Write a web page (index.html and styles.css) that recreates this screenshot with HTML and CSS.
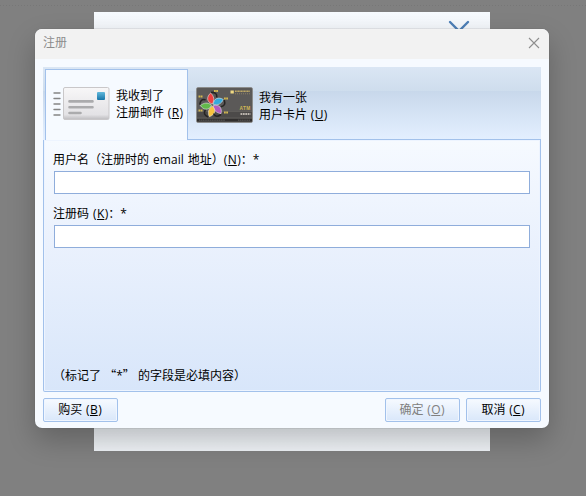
FILE: index.html
```
<!DOCTYPE html>
<html lang="zh-CN">
<head>
<meta charset="utf-8">
<title>注册</title>
<link rel="stylesheet" href="styles.css">
</head>
<body>
<div class="desktop">
  <div class="backdrop-window">
    <svg class="chevron" width="22" height="16" viewBox="0 0 22 16"><path d="M2 3 11 12 20 3" fill="none" stroke="#4d7fb7" stroke-width="2.4" stroke-linecap="round"/></svg>
  </div>
  <section class="dialog">
    <header class="titlebar">
      <span>注册</span>
      <svg width="12" height="12" viewBox="0 0 12 12"><path d="M1 1 11 11M11 1 1 11" stroke="#8e8e8e" stroke-width="1.1"/></svg>
    </header>
    <main class="content">
      <nav class="tabs">
        <div class="tab active">
          <svg class="mail" width="58" height="36" viewBox="0 0 58 36">
            <defs>
              <linearGradient id="paper" x2="0" y2="1"><stop stop-color="#f8f7f8"/><stop offset=".85" stop-color="#e3e2e5"/><stop offset="1" stop-color="#bdbcbf"/></linearGradient>
              <linearGradient id="stamp" x2="0" y2="1"><stop stop-color="#62b9dc"/><stop offset="1" stop-color="#1775a8"/></linearGradient>
            </defs>
            <path d="M1 7h6M1 12.5h6M1 18h6M1 23.5h6M1 29h6" stroke="#858585" stroke-width="1.4" stroke-linecap="round"/>
            <rect x="10.5" y="1.5" width="45.5" height="32" rx="1.5" fill="url(#paper)" stroke="#c9c7c9"/>
            <path d="M16.5 15.4h23M16.5 21.2h23M16.5 27h11" stroke="#ababad" stroke-width="2.6" stroke-linecap="round"/>
            <rect x="44" y="6" width="8" height="8" rx="1" fill="url(#stamp)"/>
          </svg>
          <div class="tab-label">我收到了<br>注册邮件 (<u>R</u>)</div>
        </div>
        <div class="tab">
          <svg class="card" width="58" height="38" viewBox="0 0 58 38">
            <defs>
              <path id="petal" d="M0-1C-5-5-3-10 2-12 4-8 4-4 0-1"/>
              <path id="swoosh" d="M4-12Q9-10 7-6" fill="none" stroke="#262423" stroke-width="1.6" stroke-linecap="round"/>
            </defs>
            <rect x=".5" y="1.5" width="56" height="35" rx="1.5" fill="#5b5958" stroke="#888683" stroke-width=".7"/>
            <path d="M1 25h55v7H1z" fill="#4c4a49"/>
            <path d="M1 32.5h55v3H1z" fill="#302e2d"/>
            <path d="M1 25.5h55M1 32h55" stroke="#6d6966" stroke-width=".6"/>
            <g transform="translate(16.5 19)" stroke="#eee" stroke-width=".5">
              <use href="#petal" fill="#ee4040" transform="rotate(-18)"/>
              <use href="#petal" fill="#35aadd" transform="rotate(54)"/>
              <use href="#petal" fill="#b35bc0" transform="rotate(126)"/>
              <use href="#petal" fill="#f8c23f" transform="rotate(186)"/>
              <use href="#petal" fill="#62b94b" transform="rotate(258)"/>
              <use href="#swoosh" transform="rotate(-22)"/>
              <use href="#swoosh" transform="rotate(50)"/>
              <use href="#swoosh" transform="rotate(122)"/>
              <use href="#swoosh" transform="rotate(184)"/>
              <use href="#swoosh" transform="rotate(256)"/>
            </g>
            <path d="M18 5h4M2.5 10.5h4M28 12.5h4M2.5 24.5h4M28 26.5h4" stroke="#d2b751" stroke-width="1.8" stroke-dasharray="1.8 .4"/>
            <rect x="34.5" y="4.5" width="3.3" height="3" fill="#f0d982"/>
            <path d="M39 5.2h15" stroke="#bda765" stroke-width="1.5" stroke-dasharray="1.2 .3"/>
            <path d="M39 7.8h15" stroke="#9a8d68" stroke-width=".8" stroke-dasharray="1 1"/>
            <text x="43.5" y="24.2" class="card-mark">ATM</text>
            <path d="M44.5 28h10" stroke="#bbb5ae" stroke-width="2" stroke-dasharray="1.8 .6"/>
            <path d="M3 34.2h26M42 34.2h12" stroke="#777" stroke-width=".6" stroke-dasharray="1.4 .4"/>
          </svg>
          <div class="tab-label">我有一张<br>用户卡片 (<u>U</u>)</div>
        </div>
      </nav>
      <form class="panel">
        <label for="user">用户名（注册时的 email 地址）(<u>N</u>)：*</label>
        <input id="user" type="text">
        <label for="code">注册码 (<u>K</u>)：*</label>
        <input id="code" type="text">
        <p>（标记了 <span class="quote">“</span>*<span class="quote">”</span> 的字段是必填内容）</p>
      </form>
      <footer class="actions">
        <button>购买 (<u>B</u>)</button>
        <button class="ok" disabled>确定 (<u>O</u>)</button>
        <button>取消 (<u>C</u>)</button>
      </footer>
    </main>
  </section>
</div>
</body>
</html>
```
FILE: styles.css
```
* { box-sizing: border-box; }
body {
  margin: 0;
  color: #000;
  font: 12px/17px "Open Sans", "Noto Sans CJK SC", sans-serif;
  word-spacing: .6px;
  text-spacing-trim: space-all;
}
.desktop {
  position: relative;
  width: 586px;
  height: 496px;
  padding: 29px 37px 0 35px;
  overflow: hidden;
  background: repeating-linear-gradient(90deg, #777 0 1px, transparent 1px 3px) 0 5px / 100% 1px no-repeat, #808080;
}
.backdrop-window {
  position: absolute;
  left: 94px;
  top: 12px;
  width: 396px;
  height: 439px;
  padding: 7px 20px;
  text-align: right;
  background: linear-gradient(#f7fbff, #f3f6fa 18px, #f0f4f8);
}
.dialog {
  position: relative;
  width: 514px;
  height: 399px;
  border-radius: 7px;
  overflow: hidden;
  background: #f6faff;
  box-shadow: 0 0 1px #555, 0 12px 28px rgba(0, 0, 0, .23);
}
.titlebar {
  display: flex;
  justify-content: space-between;
  height: 30px;
  padding: 5px 9px 0 8px;
  color: #8c8c8c;
  background: #f2f2f2;
}
.titlebar svg { margin-top: 3px; }
.content { padding: 8px 8px 7px; }
.tabs {
  display: flex;
  height: 73px;
  padding: 2px 0 0 2px;
  background: linear-gradient(#dae6f4, #cedded 24px, #c8d8eb 24px, #e3efff 72px);
}
.tab {
  display: flex;
  width: 143px;
  height: 71px;
  padding: 16px 0 0 7px;
}
.tab:not(.active) { flex: 1; padding: 17px 0 0 8px; border-bottom: 1px solid #a2c1eb; }
.tab.active {
  border: 1px solid #a2c1eb;
  border-bottom: 0;
  background: #f6faff;
}
.tab svg { flex: none; }
.tab-label { margin: 1px 0 0 5px; white-space: nowrap; }
.tab:not(.active) .tab-label { margin-top: 3px; }
u {
  padding: 0 .4px;
  text-decoration: underline;
  text-underline-offset: 1px;
  text-decoration-thickness: 1px;
  text-decoration-skip-ink: none;
}
.panel {
  display: flex;
  flex-direction: column;
  height: 252px;
  padding: 11px 10px 7px;
  border: 1px solid #a2c1eb;
  border-top: 0;
  border-radius: 0 0 2px 2px;
  background: linear-gradient(#f6faff, #eaf1fd 105px, #d8e6fa);
  box-shadow: inset 0 0 0 1px #edf4ff;
}
.panel label { height: 20px; margin-left: -1px; word-spacing: 1px; }
.panel input {
  width: 476px;
  height: 23px;
  margin: 0 0 11px;
  border: 1px solid #8faddb;
  outline: 0;
  background: #fff;
}
.panel p { margin: auto 0 0 -1px; word-spacing: 0; }
.quote { font-family: "Noto Sans CJK SC", sans-serif; line-height: 1; }
.actions { display: flex; gap: 6px; margin-top: 6px; }
button {
  width: 75px;
  height: 24px;
  padding: 0 1px 1px 0;
  border: 1px solid #a2c1eb;
  border-radius: 2px;
  color: #000;
  font: inherit;
  word-spacing: inherit;
  background: linear-gradient(#f6faff, #d9e7fa);
  box-shadow: inset 0 0 0 1px #f0f6ff;
}
button:disabled { color: #808080; }
.ok { margin-left: auto; }
.card-mark { fill: #d2b554; font: bold 4.8px "Liberation Sans", sans-serif; letter-spacing: .3px; }
```
